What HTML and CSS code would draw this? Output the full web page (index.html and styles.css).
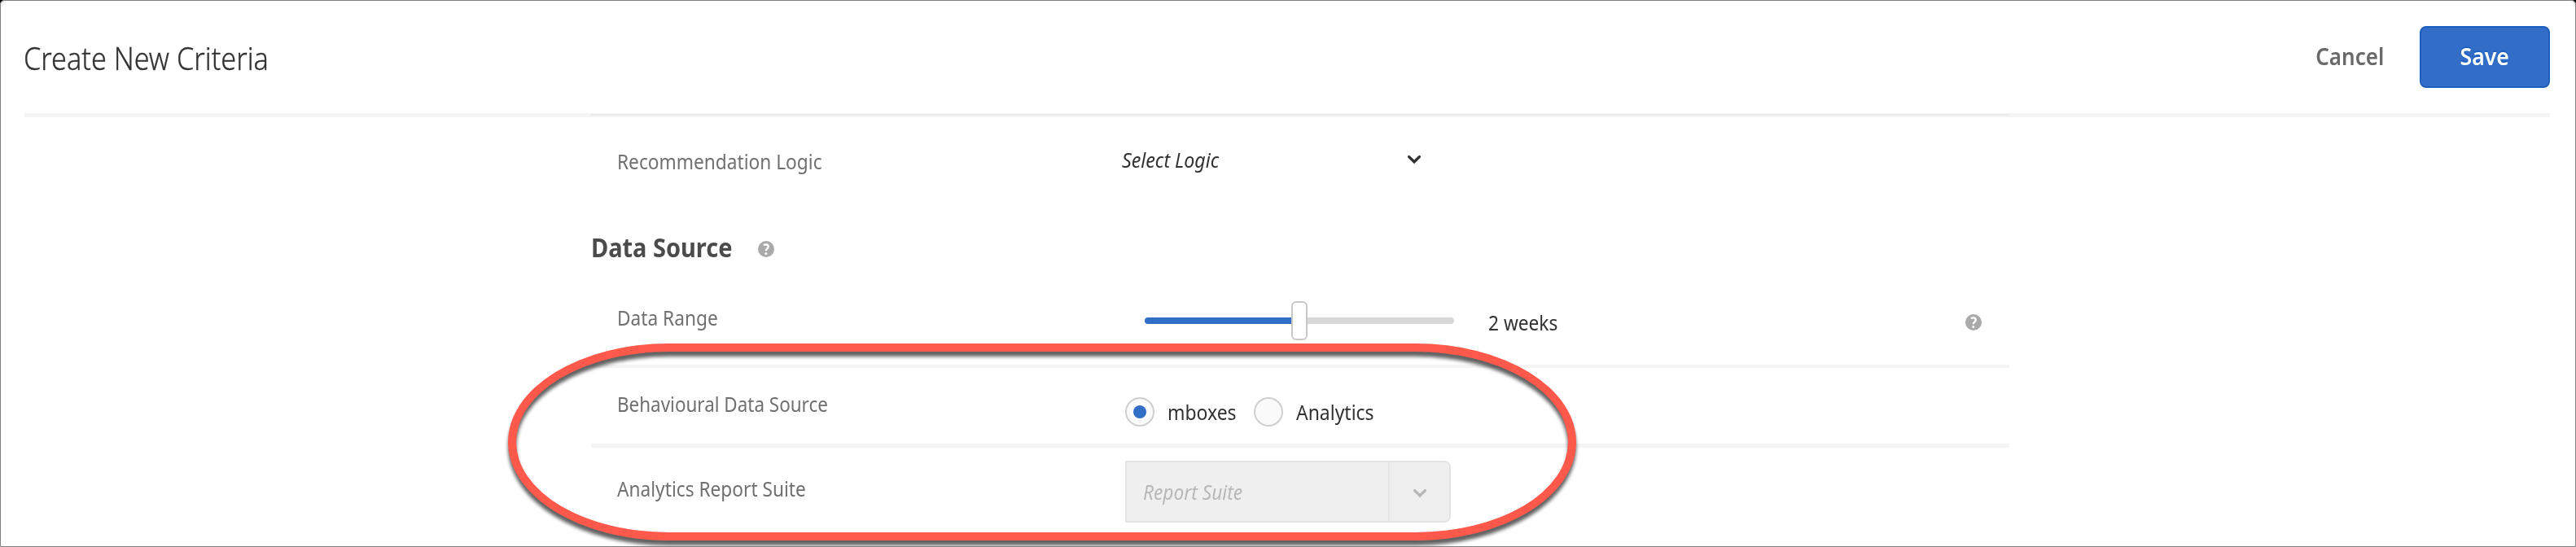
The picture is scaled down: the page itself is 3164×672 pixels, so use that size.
FILE: index.html
```html
<!DOCTYPE html>
<html lang="en">
<head>
<meta charset="utf-8">
<title>Create New Criteria</title>
<link rel="stylesheet" href="styles.css">
</head>
<body>
<div class="page">
  <header class="header">
    <h1 class="title"><span class="txt">Create New Criteria</span></h1>
    <div class="actions">
      <button class="btn btn-quiet"><span class="txt">Cancel</span></button>
      <button class="btn btn-primary"><span class="txt">Save</span></button>
    </div>
  </header>
  <main class="form">
    <section class="row row-logic">
      <div class="label"><span class="txt">Recommendation Logic</span></div>
      <div class="control">
        <div class="dropdown">
          <span class="txt">Select Logic</span>
          <svg class="chevron" viewBox="0 0 18 12"><path d="M2.6 2.6 9 8.800l6.400-6.200"/></svg>
        </div>
      </div>
    </section>
    <div class="section-head">
      <h2 class="section-title"><span class="txt">Data Source</span></h2>
      <svg class="help" viewBox="0 0 20 20"><circle cx="10" cy="10" r="10"/><path d="M6.900 5.300C9 3.800 12.700 4.100 12.700 7c0 2.400-2.900 2.500-2.900 5.300"/><circle class="dot" cx="9.800" cy="15.500" r="1.500"/></svg>
    </div>
    <section class="row row-range">
      <div class="label"><span class="txt">Data Range</span></div>
      <div class="control">
        <div class="slider"><div class="fill"></div><div class="handle"></div><div class="rest"></div></div>
        <div class="value"><span class="txt">2 weeks</span></div>
        <svg class="help" viewBox="0 0 20 20"><circle cx="10" cy="10" r="10"/><path d="M6.900 5.300C9 3.800 12.700 4.100 12.700 7c0 2.400-2.900 2.500-2.900 5.300"/><circle class="dot" cx="9.800" cy="15.500" r="1.500"/></svg>
      </div>
    </section>
    <section class="row row-source">
      <div class="label"><span class="txt">Behavioural Data Source</span></div>
      <div class="control">
        <label class="radio radio-first"><span class="knob knob-on"></span><span class="txt">mboxes</span></label>
        <label class="radio"><span class="knob"></span><span class="txt">Analytics</span></label>
      </div>
    </section>
    <section class="row row-suite">
      <div class="label"><span class="txt">Analytics Report Suite</span></div>
      <div class="control">
        <div class="select">
          <div class="select-text"><span class="txt">Report Suite</span></div>
          <div class="select-btn"><svg class="chevron" viewBox="0 0 18 12"><path d="M2.600 2.600 9 8.800l6.400-6.200"/></svg></div>
        </div>
      </div>
    </section>
  </main>
  <div class="highlight"></div>
  <div class="frame"></div>
</div>
</body>
</html>
```
FILE: styles.css
```css
* { box-sizing: border-box; }
html { background: #fff; }
body {
  margin: 0;
  font: 25.5px/36px "Noto Sans", "Open Sans", sans-serif;
  color: #323232;
}
.page {
  position: relative;
  width: 3164px;
  height: 672px;
  overflow: hidden;
  background: #fff;
}
.txt {
  display: inline-block;
  white-space: nowrap;
  transform: scaleX(.89);
  transform-origin: 0 50%;
}

.header {
  display: flex;
  justify-content: space-between;
  align-items: center;
  height: 144px;
  margin: 0 32px 0 30px;
  padding-top: 1px;
  border-bottom: 5px solid #f4f4f4;
}
.title {
  margin: 0;
  padding-top: 2px;
  font-size: 38px;
  font-weight: 300;
  line-height: 52px;
  color: #323232;
  -webkit-text-stroke: .3px #323232;
}
.title .txt { transform: scaleX(.9); margin-left: -1px; }
.actions { display: flex; align-items: center; gap: 16px; }
.btn {
  height: 76px;
  padding: 0 0 2px;
  border: 0;
  background: none;
  font: 600 28px/38px "Noto Sans", "Open Sans", sans-serif;
}
.btn .txt { transform: scaleX(.93); transform-origin: 50% 50%; }
.btn-quiet { width: 140px; color: #696969; }
.btn-primary {
  width: 160px;
  border: 2px solid #1c5fbf;
  border-radius: 8px;
  background: #326ec8;
  color: #fff;
  text-shadow: 0 -2px 0 #1c5fbf;
}
.btn-primary .txt { transform: scaleX(.95); }

.form { width: 1742px; margin-left: 726px; }
.form::before {
  content: "";
  display: block;
  height: 2px;
  margin: -4px 0 2px;
  background: #eaeaea;
}
.row {
  display: grid;
  grid-template-columns: 624px 1fr;
  align-items: center;
  padding-left: 32px;
}
.label { color: #707070; }
.control { display: flex; align-items: center; }

.row-logic { height: 104px; }
.row-logic .label { padding-top: 4px; }
.dropdown {
  display: flex;
  align-items: center;
  justify-content: space-between;
  width: 368px;
  margin-left: -4px;
  font-style: italic;
}
.dropdown .txt { transform: scaleX(.91); }
.chevron {
  width: 18px;
  height: 12px;
  fill: none;
  stroke: currentColor;
  stroke-width: 3.400;
  stroke-linecap: round;
}

.section-head {
  display: flex;
  align-items: center;
  height: 92px;
  padding-top: 20px;
}
.section-title {
  width: 205px;
  margin: 0;
  font-size: 32px;
  line-height: 44px;
  color: #4b4b4b;
}
.section-title .txt { transform: scaleX(.905); }
.section-head .help { margin-top: 4px; }
.help { width: 20px; height: 20px; fill: #a9a9a9; }
.help path { fill: none; stroke: #fff; stroke-width: 2.400; }
.help .dot { fill: #fff; }

.row-range { height: 112px; border-bottom: 4px solid #f4f4f4; }
.row-range .label { padding-bottom: 8px; }
.slider {
  display: flex;
  align-items: center;
  width: 380px;
  margin-left: 24px;
}
.fill, .rest { flex: 1; height: 8px; }
.fill { background: #326ec8; border-radius: 4px 0 0 4px; }
.rest { background: #d8d8d8; border-radius: 0 4px 4px 0; }
.handle {
  width: 20px;
  height: 48px;
  border: 2px solid #c8c8c8;
  border-radius: 6px;
  background: #fff;
}
.value { width: 584px; margin: 4px 0 0 42px; }
.row-range .help { margin: 4px 0 0 2px; }

.row-source {
  height: 98px;
  padding-top: 15px;
  border-bottom: 5px solid #f4f4f4;
}
.row-source .label { padding-bottom: 20px; }
.row-source .label .txt { transform: scaleX(.88); }
.radio { display: flex; align-items: center; gap: 16px; }
.radio .txt { transform: scaleX(.9); }
.radio-first { width: 158px; }
.knob {
  display: grid;
  place-items: center;
  width: 36px;
  height: 36px;
  border: 2px solid #cfcfcf;
  border-radius: 50%;
  background: #fafafa;
}
.knob-on::after {
  content: "";
  width: 16px;
  height: 16px;
  border-radius: 50%;
  background: #326ec8;
}

.row-suite { height: 108px; }
.row-suite .label { padding-bottom: 8px; }
.select {
  display: flex;
  width: 400px;
  height: 76px;
  border: 2px solid #e4e4e4;
  border-radius: 0 8px 8px 0;
  background: #efefef;
  color: #b8b8b8;
}
.select-text {
  display: flex;
  align-items: center;
  flex: 1;
  padding-left: 20px;
  font-style: italic;
}
.select-btn {
  display: grid;
  place-items: center;
  width: 75px;
  border-left: 2px solid #e4e4e4;
}
.select .chevron { margin-top: 3px; }

/* Red callout ring drawn over the two data source rows */
.highlight {
  position: absolute;
  left: 624px;
  top: 422px;
  width: 1312px;
  height: 242px;
  border: 10px solid #ff594b;
  border-radius: 197px / 121px;
  filter: drop-shadow(0 6px 2px rgba(0, 0, 0, .62));
}
.frame {
  position: absolute;
  inset: 0;
  border: 1px solid #7f7f7f;
  border-radius: 6px 6px 0 0;
  box-shadow: 0 0 0 6px #000;
}
```
